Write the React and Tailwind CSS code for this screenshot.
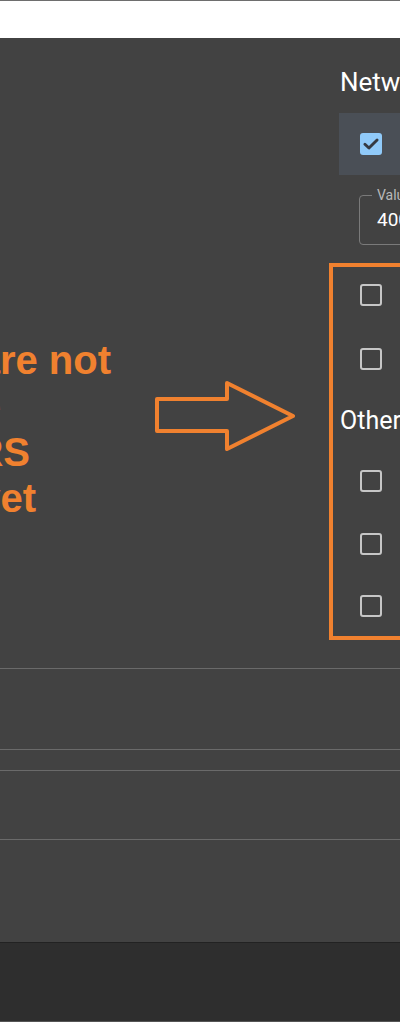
import React from "react";

const ORANGE = "#f0812f";

function Box({ checked }) {
  if (checked) {
    return (
      <div className="w-[22px] h-[22px] rounded-[3px] bg-[#90caf9] flex items-center justify-center">
        <svg width="18" height="18" viewBox="0 0 16 16" fill="none">
          <path d="M2.6 8.2 L6.2 11.6 L13.4 4.4" stroke="#353a42" strokeWidth="2.6" strokeLinecap="round" strokeLinejoin="round" />
        </svg>
      </div>
    );
  }
  return <div className="w-[22px] h-[22px] rounded-[3px] border-2 border-[#c6c6c6]" />;
}

function Annotation() {
  return (
    <>
      <div className="absolute left-0 top-[337px] font-['Liberation_Sans',Arial,sans-serif] font-bold text-[40px] leading-[46px] text-[#f0812f]">
        <div className="flex justify-end w-[111px]">
          <span className="whitespace-nowrap">These options are not</span>
        </div>
        <div className="flex justify-end w-[1px]">
          <span className="whitespace-nowrap">available</span>
        </div>
        <div className="flex justify-end w-[30px]">
          <span className="whitespace-nowrap">FOR USERS</span>
        </div>
        <div className="flex justify-end w-[36px]">
          <span className="whitespace-nowrap">yet</span>
        </div>
      </div>
      <svg className="absolute left-[150px] top-[375px]" width="155" height="85" viewBox="150 375 155 85" fill="none">
        <polygon
          points="157,399 227,399 227,383 293,416 227,449 227,431 157,431"
          stroke={ORANGE}
          strokeWidth="4"
          strokeLinejoin="round"
        />
      </svg>
    </>
  );
}

export default function App() {
  return (
    <div className="relative w-[400px] h-[1022px] overflow-hidden bg-[#424242] font-['Roboto','Noto_Sans',sans-serif]">
      <div className="h-[38px] bg-white border-t border-[#6e6e6e]" />

      <div className="h-[630px] flex flex-col">
        <div className="mt-[28px] pl-[340px] text-[26px] leading-[32px] text-white whitespace-nowrap">
          Network settings
        </div>

        <div className="mt-[15px] ml-[339px] w-[120px] h-[62px] bg-[#4a4f56] flex items-center pl-[21px]">
          <Box checked />
        </div>

        <div className="relative mt-[20px] ml-[359px] w-[120px] h-[50px] border border-[#7a7a7a] rounded-[4px]">
          <span className="absolute left-[12px] top-[-11px] px-[5px] bg-[#424242] text-[14px] leading-[20px] text-[#b9b9b9] whitespace-nowrap">
            Value
          </span>
          <div className="pl-[17px] pt-[13px] text-[19px] leading-[22px] text-white">4000</div>
        </div>

        <div className="mt-[18px] ml-[329px] w-[120px] border-4 border-[#f0812f] flex flex-col pl-[27px] pb-[19px]">
          <div className="mt-[17px]"><Box /></div>
          <div className="mt-[42px]"><Box /></div>
          <div className="mt-[35px] ml-[-20px] text-[25px] leading-[32px] text-white whitespace-nowrap">Other</div>
          <div className="mt-[33px]"><Box /></div>
          <div className="mt-[41px]"><Box /></div>
          <div className="mt-[40px]"><Box /></div>
        </div>
      </div>

      <div className="h-[81px] border-t border-[#6a6a6a]" />
      <div className="h-[21px] border-t border-[#6a6a6a]" />
      <div className="h-[69px] border-t border-[#6a6a6a]" />
      <div className="h-[103px] border-t border-[#6a6a6a]" />
      <div className="h-[80px] bg-[#2e2e2e] border-t border-[#222222] border-b border-b-[#555555]" />

      <Annotation />
    </div>
  );
}
